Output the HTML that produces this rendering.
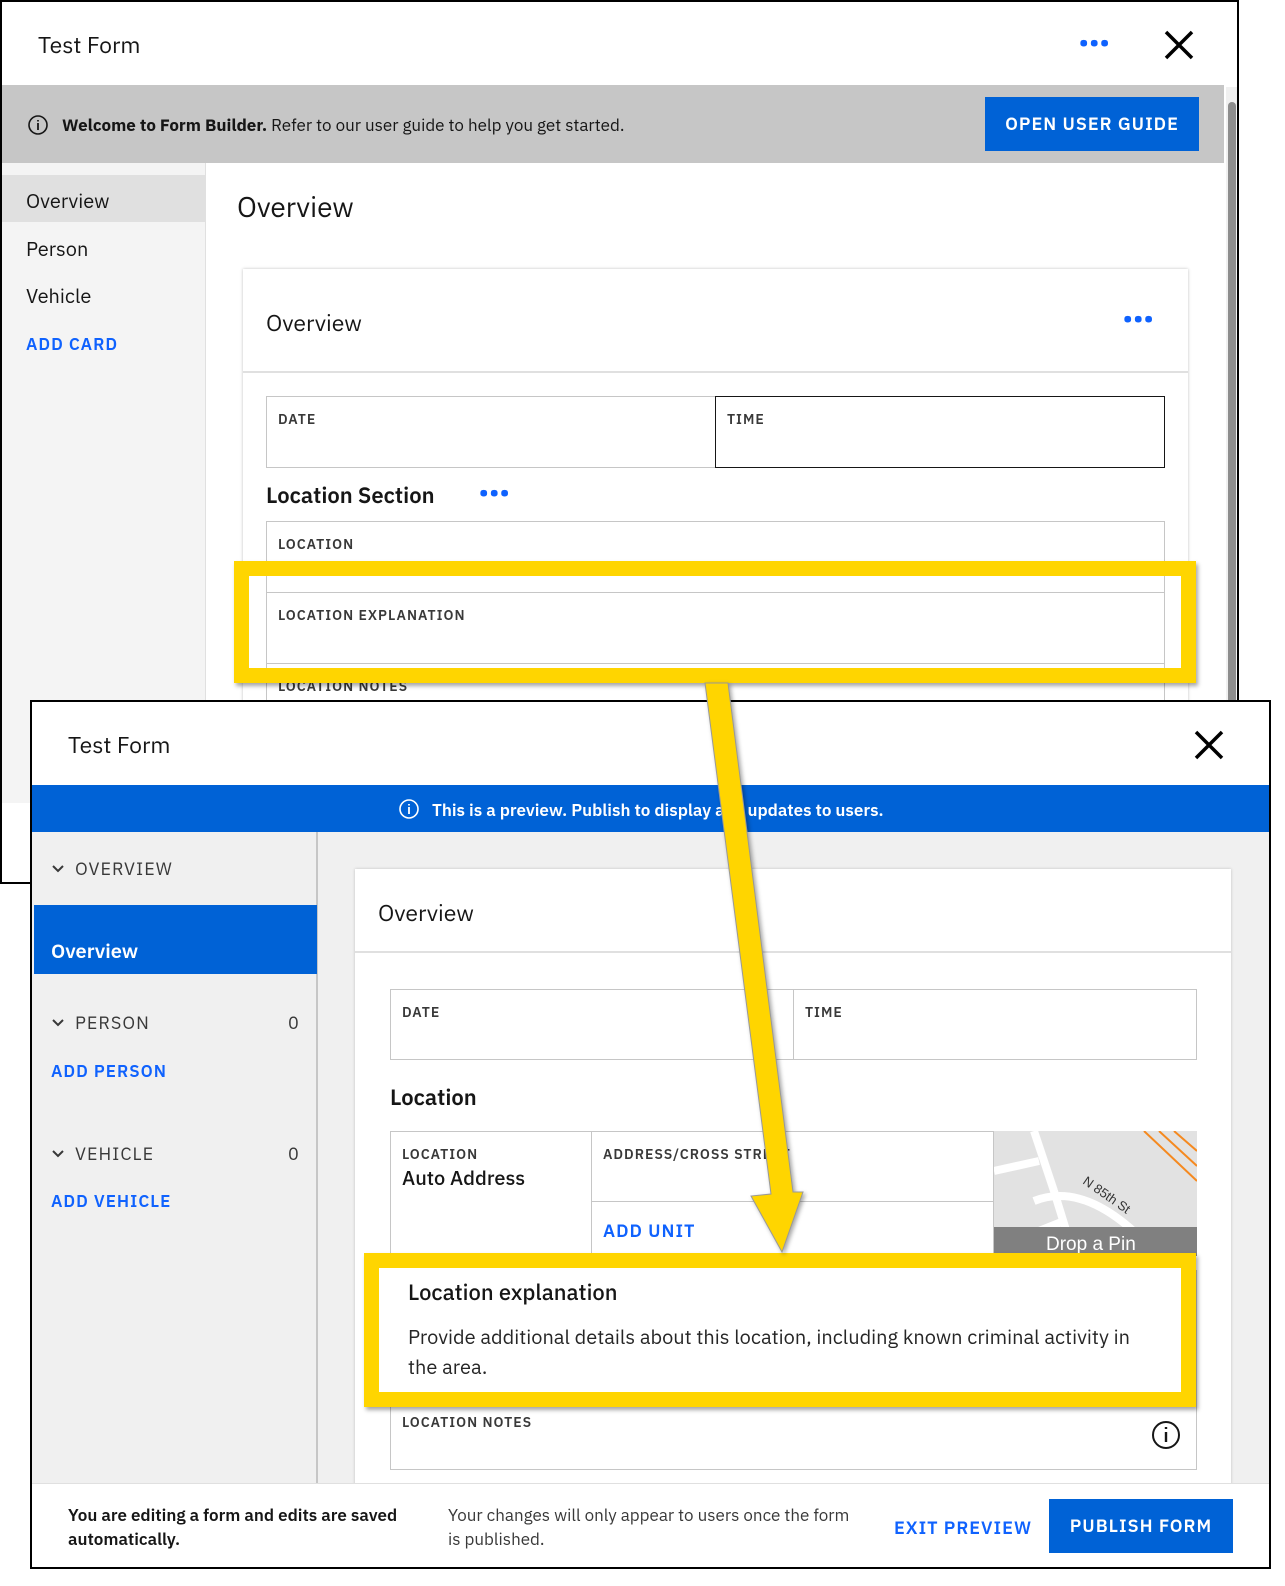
<!DOCTYPE html>
<html><head><meta charset="utf-8"><style>
*{box-sizing:border-box;margin:0;padding:0}
body{width:1285px;height:1586px;background:#fff;position:relative;overflow:hidden;font-family:"IBM Plex Sans","Liberation Sans",sans-serif;color:#161616}
.a{position:absolute}
.lbl{font-size:14px;letter-spacing:1px;color:#393939;font-weight:600}
.blue{color:#0f62fe}
.dots{color:#0f62fe;font-size:22px;font-weight:bold;letter-spacing:1px}
.fld{border:1px solid #c6c6c6;background:#fff}
.chev{position:absolute;width:12px;height:8px}
</style></head><body>

<!-- Window 1 -->
<div class="a" style="left:0;top:0;width:1239px;height:884px;border:2px solid #000;background:#fff;overflow:hidden">
  <div class="a" style="left:36px;top:28px;font-size:23px">Test Form</div>
  <div class="a dots" style="left:1077px;top:26px">•••</div>
  <svg class="a" style="left:1162px;top:28px" width="30" height="30"><path d="M2 2L28 28M28 2L2 28" stroke="#000" stroke-width="3.5"/></svg>
  <div class="a" style="left:0;top:83px;width:1222px;height:78px;background:#c6c6c6"></div>
  <svg class="a" style="left:25px;top:112px" width="22" height="22"><circle cx="11" cy="11" r="9" fill="none" stroke="#161616" stroke-width="1.6"/><path d="M11 9v7M11 6v1.5" stroke="#161616" stroke-width="1.8"/></svg>
  <div class="a" style="left:60px;top:112px;font-size:17px"><b>Welcome to Form Builder.</b> Refer to our user guide to help you get started.</div>
  <div class="a" style="left:983px;top:95px;width:214px;height:54px;background:#0062d6;color:#fff;font-size:18px;font-weight:600;letter-spacing:1px;text-align:center;line-height:54px">OPEN USER GUIDE</div>
  <div class="a" style="left:1224px;top:85px;width:12px;height:800px;background:#f0f0f0"></div>
  <div class="a" style="left:1226px;top:100px;width:8px;height:800px;background:#8d8d8d;border-radius:4px"></div>
  <div class="a" style="left:0;top:161px;width:204px;height:640px;background:#f4f4f4;border-right:1px solid #e0e0e0"></div>
  <div class="a" style="left:0;top:173px;width:204px;height:47px;background:#e0e0e0"></div>
  <div class="a" style="left:24px;top:185px;font-size:20px">Overview</div>
  <div class="a" style="left:24px;top:233px;font-size:20px">Person</div>
  <div class="a" style="left:24px;top:280px;font-size:20px">Vehicle</div>
  <div class="a blue" style="left:24px;top:331px;font-size:17px;font-weight:600;letter-spacing:1px">ADD CARD</div>
  <div class="a" style="left:235px;top:186px;font-size:28px">Overview</div>
  <div class="a" style="left:241px;top:267px;width:945px;height:700px;background:#fff;box-shadow:0 0 3px rgba(0,0,0,.25)"></div>
  <div class="a" style="left:241px;top:369px;width:945px;height:2px;background:#e0e0e0"></div>
  <div class="a" style="left:264px;top:306px;font-size:23px">Overview</div>
  <div class="a dots" style="left:1121px;top:302px">•••</div>
  <div class="a fld" style="left:264px;top:394px;width:450px;height:72px"></div>
  <div class="a" style="left:713px;top:394px;width:450px;height:72px;border:1.5px solid #161616"></div>
  <div class="a lbl" style="left:276px;top:408px">DATE</div>
  <div class="a lbl" style="left:725px;top:408px">TIME</div>
  <div class="a" style="left:264px;top:479px;font-size:22px;font-weight:600">Location Section</div>
  <div class="a dots" style="left:477px;top:476px">•••</div>
  <div class="a fld" style="left:264px;top:519px;width:899px;height:72px"></div>
  <div class="a lbl" style="left:276px;top:533px">LOCATION</div>
  <div class="a fld" style="left:264px;top:590px;width:899px;height:72px"></div>
  <div class="a lbl" style="left:276px;top:604px">LOCATION EXPLANATION</div>
  <div class="a fld" style="left:264px;top:661px;width:899px;height:72px"></div>
  <div class="a lbl" style="left:276px;top:675px">LOCATION NOTES</div>
</div>

<!-- Window 2 -->
<div class="a" style="left:30px;top:700px;width:1241px;height:869px;border:2px solid #000;background:#f0f0f0;overflow:hidden">
  <div class="a" style="left:0;top:0;width:1241px;height:83px;background:#fff"></div>
  <div class="a" style="left:36px;top:28px;font-size:23px">Test Form</div>
  <svg class="a" style="left:1162px;top:28px" width="30" height="30"><path d="M2 2L28 28M28 2L2 28" stroke="#000" stroke-width="3.5"/></svg>
  <div class="a" style="left:0;top:83px;width:1241px;height:47px;background:#0062d6"></div>
  <svg class="a" style="left:366px;top:96px" width="22" height="22"><circle cx="11" cy="11" r="9" fill="none" stroke="#fff" stroke-width="1.6"/><path d="M11 9v7M11 6v1.5" stroke="#fff" stroke-width="1.8"/></svg>
  <div class="a" style="left:400px;top:97px;font-size:17px;font-weight:600;color:#fff">This is a preview. Publish to display any updates to users.</div>
  <div class="a" style="left:0;top:130px;width:286px;height:652px;background:#f0f0f0;border-right:2px solid #c6c6c6"></div>
  <svg class="chev" style="left:20px;top:163px" viewBox="0 0 12 8"><path d="M1 1l5 5 5-5" fill="none" stroke="#393939" stroke-width="2"/></svg>
  <div class="a" style="left:43px;top:155px;font-size:18px;letter-spacing:1px;color:#393939">OVERVIEW</div>
  <div class="a" style="left:2px;top:203px;width:283px;height:69px;background:#0062d6"></div>
  <div class="a" style="left:19px;top:235px;font-size:20px;font-weight:600;color:#fff">Overview</div>
  <svg class="chev" style="left:20px;top:317px" viewBox="0 0 12 8"><path d="M1 1l5 5 5-5" fill="none" stroke="#393939" stroke-width="2"/></svg>
  <div class="a" style="left:43px;top:309px;font-size:18px;letter-spacing:1px;color:#393939">PERSON</div>
  <div class="a" style="left:256px;top:309px;font-size:18px;color:#393939">0</div>
  <div class="a blue" style="left:19px;top:358px;font-size:17px;font-weight:600;letter-spacing:1px">ADD PERSON</div>
  <svg class="chev" style="left:20px;top:448px" viewBox="0 0 12 8"><path d="M1 1l5 5 5-5" fill="none" stroke="#393939" stroke-width="2"/></svg>
  <div class="a" style="left:43px;top:440px;font-size:18px;letter-spacing:1px;color:#393939">VEHICLE</div>
  <div class="a" style="left:256px;top:440px;font-size:18px;color:#393939">0</div>
  <div class="a blue" style="left:19px;top:488px;font-size:17px;font-weight:600;letter-spacing:1px">ADD VEHICLE</div>

  <div class="a" style="left:323px;top:167px;width:876px;height:620px;background:#fff;box-shadow:0 0 3px rgba(0,0,0,.2)"></div>
  <div class="a" style="left:323px;top:249px;width:876px;height:2px;background:#e0e0e0"></div>
  <div class="a" style="left:346px;top:196px;font-size:23px">Overview</div>
  <div class="a fld" style="left:358px;top:287px;width:404px;height:71px"></div>
  <div class="a fld" style="left:761px;top:287px;width:404px;height:71px"></div>
  <div class="a lbl" style="left:370px;top:301px">DATE</div>
  <div class="a lbl" style="left:773px;top:301px">TIME</div>
  <div class="a" style="left:358px;top:381px;font-size:22px;font-weight:600">Location</div>
  <div class="a fld" style="left:358px;top:429px;width:202px;height:140px"></div>
  <div class="a fld" style="left:559px;top:429px;width:403px;height:71px"></div>
  <div class="a fld" style="left:559px;top:499px;width:403px;height:70px"></div>
  <div class="a lbl" style="left:370px;top:443px">LOCATION</div>
  <div class="a" style="left:370px;top:462px;font-size:20px;font-weight:500">Auto Address</div>
  <div class="a lbl" style="left:571px;top:443px">ADDRESS/CROSS STREET</div>
  <div class="a blue" style="left:571px;top:517px;font-size:18px;font-weight:600;letter-spacing:1px">ADD UNIT</div>
  <svg class="a" style="left:962px;top:429px" width="203" height="125">
    <rect width="203" height="125" fill="#e2e2e2"/>
    <path d="M40 0L60 60M0 40L45 30M40 70Q90 50 150 110M20 110L70 90M60 60L80 125" stroke="#fff" stroke-width="8" fill="none"/>
    <path d="M150 0L203 50M165 0L203 35M180 0L203 20" stroke="#f5891f" stroke-width="2"/>
    <text x="88" y="52" font-size="13" fill="#333" transform="rotate(35 88 52)" font-family="Liberation Sans">N 85th St</text>
    <rect y="96" width="203" height="29" fill="#808080"/>
    <text x="52" y="119" font-size="19" fill="#fff" font-family="Liberation Sans">Drop a Pin</text>
  </svg>
  <div class="a fld" style="left:358px;top:568px;width:807px;height:200px"></div>
  <div class="a lbl" style="left:370px;top:711px">LOCATION NOTES</div>
  <svg class="a" style="left:1118px;top:717px" width="32" height="32"><circle cx="16" cy="16" r="13" fill="none" stroke="#161616" stroke-width="2"/><path d="M16 13v10M16 8v2" stroke="#161616" stroke-width="2.4"/></svg>

  <div class="a" style="left:0;top:781px;width:1241px;height:88px;background:#fff;border-top:1px solid #e0e0e0"></div>
  <div class="a" style="left:36px;top:801px;font-size:17px;font-weight:600;line-height:24px">You are editing a form and edits are saved<br>automatically.</div>
  <div class="a" style="left:416px;top:801px;font-size:17px;line-height:24px;color:#393939">Your changes will only appear to users once the form<br>is published.</div>
  <div class="a blue" style="left:862px;top:814px;font-size:18px;font-weight:600;letter-spacing:1px">EXIT PREVIEW</div>
  <div class="a" style="left:1017px;top:797px;width:184px;height:54px;background:#0062d6;color:#fff;font-size:18px;font-weight:600;letter-spacing:1px;text-align:center;line-height:54px">PUBLISH FORM</div>
</div>

<!-- Annotation overlays -->
<div class="a" style="left:234px;top:561px;width:962px;height:122px;border:15px solid #ffd500;box-shadow:2px 3px 4px rgba(0,0,0,.35)"></div>
<div class="a" style="left:364px;top:1253px;width:832px;height:154px;border:15px solid #ffd500;box-shadow:2px 3px 4px rgba(0,0,0,.35);background:#fff"></div>
<div class="a" style="left:408px;top:1278px;font-size:22px;font-weight:500">Location explanation</div>
<div class="a" style="left:408px;top:1322px;font-size:20px;line-height:30px;color:#262626">Provide additional details about this location, including known criminal activity in<br>the area.</div>
<svg class="a" style="left:0;top:0;pointer-events:none" width="1285" height="1586">
  <polygon points="705,683 728,683 793,1192 803,1192 782,1252 751,1196 771,1194" fill="#ffd500" stroke="#999" stroke-width="1" style="filter:drop-shadow(2px 2px 2px rgba(0,0,0,.35))"/>
</svg>
</body></html>
